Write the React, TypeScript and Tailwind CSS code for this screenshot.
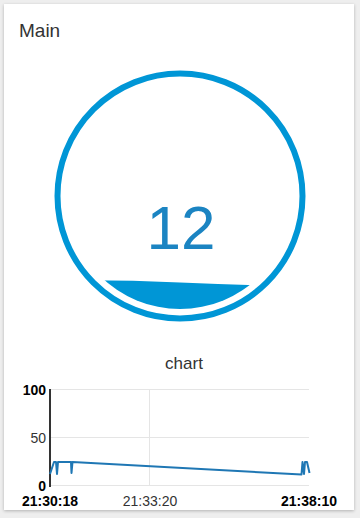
import React from 'react';

const RING = '#0096d6';

const Gauge = () => (
  <svg width="252" height="252" viewBox="0 0 252 252" className="block">
    <defs>
      <clipPath id="inner">
        <circle cx="126" cy="126" r="113" />
      </clipPath>
    </defs>
    <circle cx="126" cy="126" r="122.5" fill="none" stroke={RING} strokeWidth="6" />
    <path
      d="M0 210.5 Q 63 209.5 126 212.5 T 252 216 L252 252 L0 252 Z"
      fill={RING}
      clipPath="url(#inner)"
    />
    <text
      x="127"
      y="179"
      textAnchor="middle"
      fill="#1b84c2"
      fontSize="62"
      fontFamily="'Liberation Sans', Arial, sans-serif"
    >
      12
    </text>
  </svg>
);

// chart drawn in page coordinates, shifted back by the svg's own offset
const points: [number, number][] = [
  [50, 474], [54, 462], [56, 462], [57, 474], [58, 462], [71, 462], [71.5, 473], [72.5, 462],
  [301.5, 474.5], [302.5, 462], [304, 474], [305, 462], [307, 462], [309.5, 473],
];

const Chart = () => {
  const line = points.map(([x, y], i) => `${i ? 'L' : 'M'}${x} ${y}`).join(' ');
  return (
    <svg width="350" height="139" viewBox="4 371 350 139" className="block">
      <g stroke="#e5e5e5" strokeWidth="1">
        <line x1="50" y1="389.5" x2="309" y2="389.5" />
        <line x1="50" y1="437.5" x2="309" y2="437.5" />
        <line x1="50" y1="485.5" x2="309" y2="485.5" />
        <line x1="149.5" y1="389" x2="149.5" y2="486" />
      </g>
      <line x1="50" y1="389" x2="50" y2="487" stroke="#333" strokeWidth="2" />
      <path d={line} fill="none" stroke="#1f77b4" strokeWidth="2" strokeLinejoin="round" />
      <g fontFamily="'Liberation Sans', Arial, sans-serif" fontSize="14" fill="#000">
        <text x="46" y="395" textAnchor="end" fontWeight="bold">100</text>
        <text x="46" y="443" textAnchor="end" fill="#333">50</text>
        <text x="46" y="491" textAnchor="end" fontWeight="bold">0</text>
        <text x="22" y="506" fontWeight="bold">21:30:18</text>
        <text x="150" y="506" textAnchor="middle" fill="#333">21:33:20</text>
        <text x="337" y="506" textAnchor="end" fontWeight="bold">21:38:10</text>
      </g>
    </svg>
  );
};

const App = () => {
  return (
    <div className="w-[360px] h-[518px] bg-[#eeeeee] p-1 font-['Liberation_Sans',Arial,sans-serif]">
      <div className="w-[350px] h-[506px] bg-white shadow-[0_1px_3px_rgba(0,0,0,0.25)] flex flex-col">
        <div className="h-[66px] pt-[16px] pl-[15px] text-[19px] leading-[22px] text-[#333]">Main</div>
        <div className="pl-[50px]">
          <Gauge />
        </div>
        <div className="mt-[29px] h-[20px] pt-[3px] pl-[10px] text-center text-[17px] leading-[20px] text-[#333]">
          chart
        </div>
        <Chart />
      </div>
    </div>
  );
};

export default App;
